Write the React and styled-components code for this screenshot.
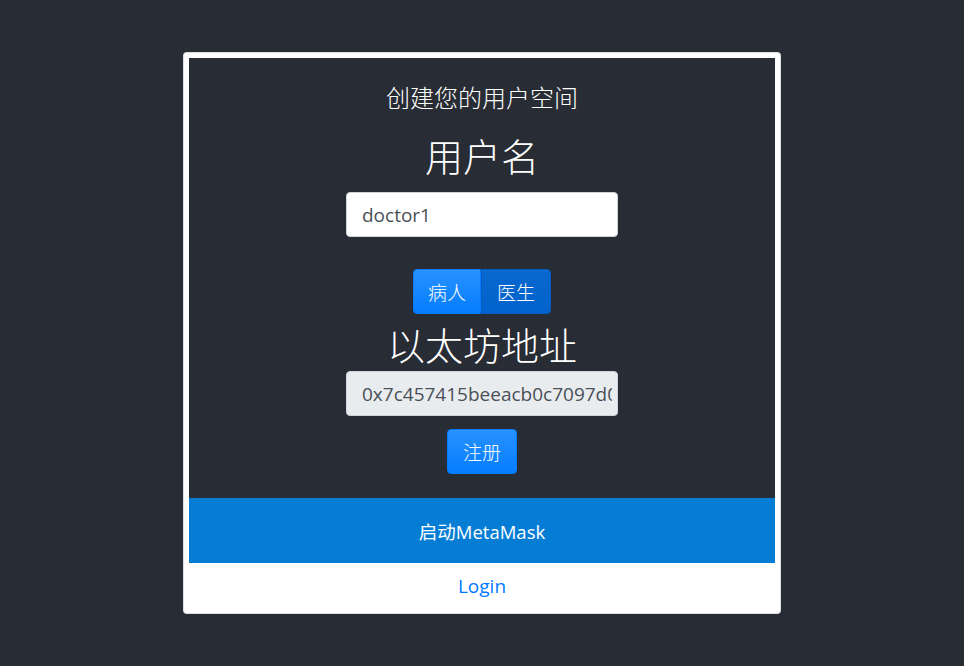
import React from "react";
import styled, { createGlobalStyle } from "styled-components";

const GlobalStyle = createGlobalStyle`
  html, body { margin: 0; padding: 0; background: #282c34; }
  body {
    font-family: "Open Sans", "Noto Sans CJK SC", sans-serif;
    -webkit-font-smoothing: antialiased;
  }
  * { box-sizing: border-box; }
`;

const Page = styled.div`
  min-height: 100vh;
  display: flex;
  justify-content: center;
  align-items: flex-start;
  padding-top: 52px;
`;

const Card = styled.div`
  width: 598px;
  background: #fff;
  border: 1px solid rgba(0, 0, 0, 0.125);
  border-radius: 4px;
  padding: 5px 5px 0;
  display: flex;
  flex-direction: column;
`;

const Panel = styled.div`
  background: #282c34;
  height: 440px;
  display: flex;
  flex-direction: column;
  align-items: center;
  padding-top: 21px;
  color: #fff;
`;

const Title = styled.div`
  font-family: "Noto Sans CJK SC", sans-serif;
  font-weight: 300;
  font-size: ${(p) => p.$size}px;
  line-height: ${(p) => p.$lh}px;
  margin-top: ${(p) => p.$mt || 0}px;
  color: #fff;
`;

const Input = styled.input`
  width: 272px;
  height: 45px;
  margin-top: ${(p) => p.$mt || 0}px;
  padding: 0 5px 0 15px;
  font-family: "Open Sans", "Noto Sans CJK SC", sans-serif;
  font-size: 19px;
  color: #495057;
  background: ${(p) => (p.readOnly ? "#e9ecef" : "#fff")};
  border: 1px solid #ced4da;
  border-radius: 4px;
  outline: none;
`;

const Group = styled.div`
  display: flex;
  margin-top: ${(p) => p.$mt || 0}px;
`;

const Button = styled.button`
  height: 45px;
  padding: 0 ${(p) => p.$px || 15}px;
  margin-top: ${(p) => p.$mt || 0}px;
  font-family: "Noto Sans CJK SC", sans-serif;
  font-weight: 300;
  font-size: 19px;
  color: #fff;
  border: 1px solid ${(p) => (p.$active ? "#005cbf" : "#007bff")};
  background: ${(p) =>
    p.$active
      ? "linear-gradient(180deg, #0a68cf, #0062cc)"
      : "linear-gradient(180deg, #2892ff, #047dff)"};
  border-radius: ${(p) =>
    p.$pos === "left" ? "4px 0 0 4px" : p.$pos === "right" ? "0 4px 4px 0" : "4px"};
  cursor: pointer;
`;

const Band = styled.div`
  height: 65px;
  background: #057dd5;
  color: #fff;
  display: flex;
  align-items: center;
  justify-content: center;
  font-family: "Open Sans", "Noto Sans CJK SC", sans-serif;
  font-size: 18.5px;
`;

const LoginRow = styled.div`
  height: 50px;
  display: flex;
  align-items: center;
  justify-content: center;
  padding-bottom: 4px;
`;

const LoginLink = styled.a`
  color: #007bff;
  font-family: "Open Sans", sans-serif;
  font-size: 19px;
  text-decoration: none;
`;

export default function App() {
  return (
    <>
      <GlobalStyle />
      <Page>
        <Card>
          <Panel>
            <Title $size={24} $lh={36}>创建您的用户空间</Title>
            <Title $size={38} $lh={48} $mt={16}>用户名</Title>
            <Input $mt={13} defaultValue="doctor1" />
            <Group $mt={32}>
              <Button $pos="left" $px={14}>病人</Button>
              <Button $pos="right" $active>医生</Button>
            </Group>
            <Title $size={38} $lh={48} $mt={6}>以太坊地址</Title>
            <Input $mt={3} readOnly value="0x7c457415beeacb0c7097d0a1b2c3d4e5f6a7b8c9" />
            <Button $mt={13}>注册</Button>
          </Panel>
          <Band>启动MetaMask</Band>
          <LoginRow>
            <LoginLink href="#">Login</LoginLink>
          </LoginRow>
        </Card>
      </Page>
    </>
  );
}
